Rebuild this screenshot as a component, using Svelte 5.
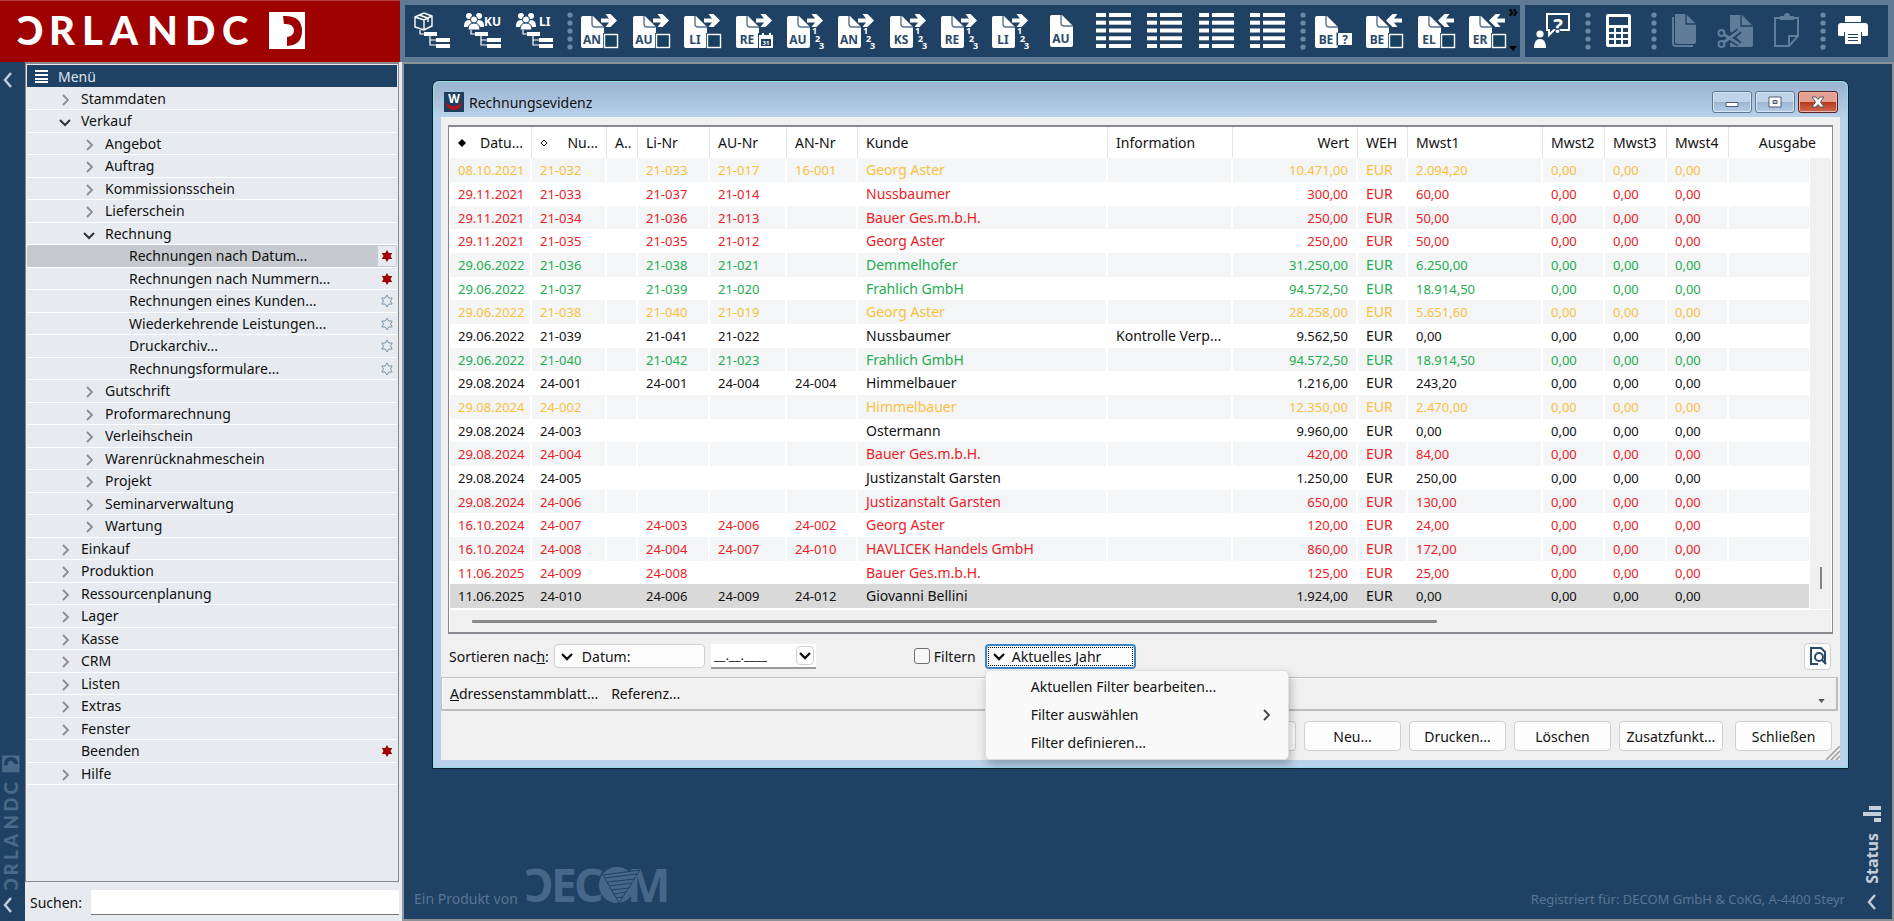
<script>
  const mainTools = [
    { kind: "box", name: "Artikel" },
    { kind: "people", text: "KU", name: "Kunden" },
    { kind: "people", text: "LI", name: "Lieferanten" },
    { kind: "dots" },
    { kind: "doc", text: "AN", arrow: "right", extra: "square" },
    { kind: "doc", text: "AU", arrow: "right", extra: "square" },
    { kind: "doc", text: "LI", arrow: "right", extra: "square" },
    { kind: "doc", text: "RE", arrow: "right", extra: "calendar" },
    { kind: "doc", text: "AU", arrow: "right", extra: "numbers" },
    { kind: "doc", text: "AN", arrow: "right", extra: "numbers" },
    { kind: "doc", text: "KS", arrow: "right", extra: "numbers" },
    { kind: "doc", text: "RE", arrow: "right", extra: "numbers" },
    { kind: "doc", text: "LI", arrow: "right", extra: "numbers" },
    { kind: "single", text: "AU" },
    { kind: "list", name: "Liste 1" },
    { kind: "list", name: "Liste 2" },
    { kind: "list", name: "Liste 3" },
    { kind: "list", name: "Liste 4" },
    { kind: "dots" },
    { kind: "doc", text: "BE", extra: "question" },
    { kind: "doc", text: "BE", arrow: "left", extra: "square" },
    { kind: "doc", text: "EL", arrow: "left", extra: "square" },
    { kind: "doc", text: "ER", arrow: "left", extra: "square" },
  ];

  const sideTools = [
    { kind: "help", name: "Hilfe" },
    { kind: "dots" },
    { kind: "calc", name: "Rechner" },
    { kind: "dots" },
    { kind: "copy", name: "Kopieren", disabled: true },
    { kind: "cut", name: "Ausschneiden", disabled: true },
    { kind: "paste", name: "Einfügen", disabled: true },
    { kind: "dots" },
    { kind: "print", name: "Drucken" },
  ];

  let tree = [
    { label: "Stammdaten", level: 0, arrow: "closed" },
    { label: "Verkauf", level: 0, arrow: "open" },
    { label: "Angebot", level: 1, arrow: "closed" },
    { label: "Auftrag", level: 1, arrow: "closed" },
    { label: "Kommissionsschein", level: 1, arrow: "closed" },
    { label: "Lieferschein", level: 1, arrow: "closed" },
    { label: "Rechnung", level: 1, arrow: "open" },
    { label: "Rechnungen nach Datum...", level: 2, star: "on" },
    { label: "Rechnungen nach Nummern...", level: 2, star: "on" },
    { label: "Rechnungen eines Kunden...", level: 2, star: "off" },
    { label: "Wiederkehrende Leistungen...", level: 2, star: "off" },
    { label: "Druckarchiv...", level: 2, star: "off" },
    { label: "Rechnungsformulare...", level: 2, star: "off" },
    { label: "Gutschrift", level: 1, arrow: "closed" },
    { label: "Proformarechnung", level: 1, arrow: "closed" },
    { label: "Verleihschein", level: 1, arrow: "closed" },
    { label: "Warenrücknahmeschein", level: 1, arrow: "closed" },
    { label: "Projekt", level: 1, arrow: "closed" },
    { label: "Seminarverwaltung", level: 1, arrow: "closed" },
    { label: "Wartung", level: 1, arrow: "closed" },
    { label: "Einkauf", level: 0, arrow: "closed" },
    { label: "Produktion", level: 0, arrow: "closed" },
    { label: "Ressourcenplanung", level: 0, arrow: "closed" },
    { label: "Lager", level: 0, arrow: "closed" },
    { label: "Kasse", level: 0, arrow: "closed" },
    { label: "CRM", level: 0, arrow: "closed" },
    { label: "Listen", level: 0, arrow: "closed" },
    { label: "Extras", level: 0, arrow: "closed" },
    { label: "Fenster", level: 0, arrow: "closed" },
    { label: "Beenden", level: 0, star: "on" },
    { label: "Hilfe", level: 0, arrow: "closed" },
  ];

  // color, date, number, Li, AU, AN, customer, info, value, vat
  const rows = [
    ["orange", "08.10.2021", "21-032", "21-033", "21-017", "16-001", "Georg Aster", "", "10.471,00", "2.094,20"],
    ["red", "29.11.2021", "21-033", "21-037", "21-014", "", "Nussbaumer", "", "300,00", "60,00"],
    ["red", "29.11.2021", "21-034", "21-036", "21-013", "", "Bauer Ges.m.b.H.", "", "250,00", "50,00"],
    ["red", "29.11.2021", "21-035", "21-035", "21-012", "", "Georg Aster", "", "250,00", "50,00"],
    ["green", "29.06.2022", "21-036", "21-038", "21-021", "", "Demmelhofer", "", "31.250,00", "6.250,00"],
    ["green", "29.06.2022", "21-037", "21-039", "21-020", "", "Frahlich GmbH", "", "94.572,50", "18.914,50"],
    ["orange", "29.06.2022", "21-038", "21-040", "21-019", "", "Georg Aster", "", "28.258,00", "5.651,60"],
    ["black", "29.06.2022", "21-039", "21-041", "21-022", "", "Nussbaumer", "Kontrolle Verp...", "9.562,50", "0,00"],
    ["green", "29.06.2022", "21-040", "21-042", "21-023", "", "Frahlich GmbH", "", "94.572,50", "18.914,50"],
    ["black", "29.08.2024", "24-001", "24-001", "24-004", "24-004", "Himmelbauer", "", "1.216,00", "243,20"],
    ["orange", "29.08.2024", "24-002", "", "", "", "Himmelbauer", "", "12.350,00", "2.470,00"],
    ["black", "29.08.2024", "24-003", "", "", "", "Ostermann", "", "9.960,00", "0,00"],
    ["red", "29.08.2024", "24-004", "", "", "", "Bauer Ges.m.b.H.", "", "420,00", "84,00"],
    ["black", "29.08.2024", "24-005", "", "", "", "Justizanstalt Garsten", "", "1.250,00", "250,00"],
    ["red", "29.08.2024", "24-006", "", "", "", "Justizanstalt Garsten", "", "650,00", "130,00"],
    ["red", "16.10.2024", "24-007", "24-003", "24-006", "24-002", "Georg Aster", "", "120,00", "24,00"],
    ["red", "16.10.2024", "24-008", "24-004", "24-007", "24-010", "HAVLICEK Handels GmbH", "", "860,00", "172,00"],
    ["red", "11.06.2025", "24-009", "24-008", "", "", "Bauer Ges.m.b.H.", "", "125,00", "25,00"],
    ["black", "11.06.2025", "24-010", "24-006", "24-009", "24-012", "Giovanni Bellini", "", "1.924,00", "0,00"],
  ];

  const logoLetters = [
    ["Ɔ", 1],
    ["R", 33],
    ["L", 66],
    ["A", 94],
    ["N", 131],
    ["D", 169],
    ["C", 206],
  ];

  const star =
    "M6 0 L7.7 3 H11.2 L9.5 6 L11.2 9 H7.7 L6 12 L4.3 9 H0.8 L2.5 6 L0.8 3 H4.3 Z";

  let selectedMenu = "Rechnungen nach Datum...";
  let selectedRow = rows.length - 1;
  let menuOpen = true;
  let filtern = false;
  let search = "";
  let date = "__.__.____";
</script>

{#snippet logo()}
  {#each logoLetters as [letter, x]}
    <text {x} y="37" class="logo-letter">{letter}</text>
  {/each}
  <path
    fill-rule="evenodd"
    d="M253 4h36v37h-36z M267 8 Q286 7 286 23 Q286 37 271 38 V29 Q278 28 278 22 Q277 15 268 16z"
  />
{/snippet}

{#snippet chevron(dir)}
  <svg class="chevron {dir}" viewBox="0 0 16 16" width="16" height="16" aria-hidden="true">
    {#if dir === "open"}
      <path d="M3 6l5 5 5-5" />
    {:else if dir === "left"}
      <path d="M11 1L5 8l6 7" />
    {:else}
      <path d="M6 3l5 5-5 5" />
    {/if}
  </svg>
{/snippet}

{#snippet nodes()}
  <path d="M7 18v4h6M17 24v9h8M17 28h8" fill="none" stroke="currentColor" stroke-width="1.2" />
  <path d="M11 20h13v4H11zM23 26h14v4H23zM23 32h14v4H23z" />
{/snippet}

{#snippet tool(t)}
  {#if t.kind === "dots"}
    <svg class="dots" viewBox="0 0 6 38" width="6" height="38" aria-hidden="true">
      {#each [3, 11, 19, 27, 35] as cy}
        <circle cx="3" {cy} r="2.6" />
      {/each}
    </svg>
  {:else}
    <button class="tool" aria-label={t.name || t.text} disabled={t.disabled}>
      <svg viewBox="0 0 38 38" width="38" height="38" aria-hidden="true">
        {#if t.kind === "box"}
          <path
            d="M2 5l9-4 8 3v10l-8 4-9-3zM2 5l9 3 8-4M11 8v10M6 3l9 3v4"
            fill="none"
            stroke="currentColor"
            stroke-width="1.4"
          />
          {@render nodes()}
        {:else if t.kind === "people"}
          <circle cx="5" cy="4" r="3" />
          <circle cx="15" cy="4" r="3" />
          <path d="M0 14q0-6 5-6 3 0 3 3l-3 4H0zM20 14q0-6-5-6-3 0-3 3l3 4h5z" />
          <circle cx="10" cy="7.5" r="3.6" class="cut" />
          <path class="cut" d="M4 18q0-7 6-7t6 7z" />
          {@render nodes()}
          <text x={t.text === "KU" ? 20 : 23} y="14" class="side-text">{t.text}</text>
        {:else if t.kind === "doc" || t.kind === "single"}
          <g transform={t.kind === "single" ? "translate(6 -1)" : ""}>
            <path d="M2 4h10l11 11v19q0 2-2 2H2q-2 0-2-2V6q0-2 2-2z" />
            <path class="fold" d="M11 4v8q0 3 3 3h9" fill="none" />
            <text x="11" y="32" class="doc-text">{t.text}</text>
          </g>
          {#if t.arrow === "right"}
            <path class="arrow" d="M20 6.5h8L24.500 2h5l6.500 6.500-6.500 6.500h-5L28 10.500h-8z" />
          {:else if t.arrow === "left"}
            <path class="arrow" d="M36 6.5h-8L31.500 2h-5L20 8.500l6.500 6.500h5L28 10.500h8z" />
          {/if}
          {#if t.extra === "square"}
            <rect x="22" y="21" width="16" height="16" class="gap" />
            <rect x="23.5" y="22.5" width="13" height="13" class="square" />
          {:else if t.extra === "calendar"}
            <rect x="22" y="21" width="16" height="16" class="gap" />
            <path fill-rule="evenodd" d="M24 23h2v-2h2v2h5v-2h2v2h2v13H23V23zM25 27v7h10v-7z" />
            <text x="30" y="33" class="tiny-text">31</text>
          {:else if t.extra === "question"}
            <path d="M21.5 20.5h16.5v13H21.5z" class="gap" />
            <path d="M23 21h14v12H23z" />
            <text x="30" y="32" class="doc-text">?</text>
          {:else if t.extra === "numbers"}
            <text x="25" y="22" class="number">1</text>
            <text x="28" y="30" class="number">2</text>
            <text x="32" y="37" class="number">3</text>
          {/if}
        {:else if t.kind === "list"}
          {#each [1, 8.7, 16.5, 24.3, 32] as y}
            <rect x="1" {y} width="10" height="4" />
            <rect x="14" {y} width="22" height="4" />
          {/each}
        {:else if t.kind === "help"}
          <path d="M13 2h22v16H20l-5 5v-5h-2z" fill="none" stroke="currentColor" stroke-width="2" />
          <text x="24" y="21" class="big-mark">?</text>
          <circle cx="6" cy="22" r="3.6" />
          <path d="M0 36q0-9 6-9t6 9z" />
        {:else if t.kind === "calc"}
          <path
            fill-rule="evenodd"
            d="M8 2h21q2 0 2 2v29q0 2-2 2H8q-2 0-2-2V4q0-2 2-2zM9 5v8h19V5zM9 16v4h5v-4zM16 16v4h5v-4zM23 16v4h5v-4zM9 22v4h5v-4zM16 22v4h5v-4zM23 22v4h5v-4zM9 28v4h5v-4zM16 28v4h5v-4zM23 28v4h5v-4z"
          />
        {:else if t.kind === "copy"}
          <path d="M9 2h11l10 10v18q0 2-2 2H11q-2 0-2-2z" />
          <path d="M20 2v10h10" class="fold" fill="none" />
          <path d="M7 5v26q0 3 3 3h17" fill="none" stroke="currentColor" stroke-width="2" />
        {:else if t.kind === "cut"}
          <path d="M13 3h12l11 11v19q0 2-2 2H13z" />
          <path d="M24 3v11h12M12 19l12 12M12 31l12-11" class="fold" fill="none" />
          <path class="blade-gap" d="M6 22l16 10M6 31l16-12" />
          <path class="blade" d="M6 22l16 10M6 31l16-12" />
          <circle cx="4.5" cy="21" r="3" class="ring" />
          <circle cx="4.5" cy="32" r="3" class="ring" />
        {:else if t.kind === "paste"}
          <path d="M7 6h23v18l-9 10H7zM30 24h-9v10" fill="none" stroke="currentColor" stroke-width="2" />
          <path d="M12 8V4h4q0-3 3-3t3 3h4v4z" />
        {:else if t.kind === "print"}
          <path
            fill-rule="evenodd"
            d="M11 4h16v6H11zM7 11h24q3 0 3 3v9q0 1-2 1h-4v-4H10v4H6q-2 0-2-1v-9q0-3 3-3z"
          />
          <path fill-rule="evenodd" d="M11 19h16v13H11zM14 22v1h10v-1zM14 25v1h10v-1zM14 28v1h10v-1z" />
        {/if}
      </svg>
    </button>
  {/if}
{/snippet}

<div class="app">
  <header class="top">
    <div class="brand">
      <svg viewBox="0 0 290 50" width="290" height="50" role="img" aria-label="Orlando">
        {@render logo()}
      </svg>
    </div>
    <div class="toolbars">
      <div class="toolbar main-tools">
        {#each mainTools as t}
          {@render tool(t)}
        {/each}
        <div class="overflow">
          <span>»</span>
          <svg viewBox="0 0 8 5" width="8" height="5"><path d="M0 0h8L4 5z" /></svg>
        </div>
      </div>
      <div class="toolbar side-tools">
        {#each sideTools as t}
          {@render tool(t)}
        {/each}
      </div>
    </div>
  </header>

  <div class="body">
    <div class="strip">
      <button class="collapse" aria-label="Einklappen">{@render chevron("left")}</button>
      <div class="strip-bottom">
        <svg class="strip-logo" viewBox="0 0 50 290" width="24" height="136" aria-hidden="true">
          <g transform="translate(0 290) rotate(-90)">{@render logo()}</g>
        </svg>
        <button class="collapse" aria-label="Einklappen">{@render chevron("left")}</button>
      </div>
    </div>

    <aside class="sidebar">
      <nav class="tree">
        <div class="tree-head">
          <svg viewBox="0 0 13 13" width="13" height="13" aria-hidden="true">
            <path d="M0 0h13v2H0zM0 4h13v2H0zM0 8h13v2H0zM0 11h13v2H0z" />
          </svg>
          Menü
        </div>
        <ul>
          {#each tree as item}
            <li>
              <button
                class="node level{item.level}"
                class:selected={item.label === selectedMenu}
                on:click={() => (selectedMenu = item.label)}
              >
                <span class="slot">
                  {#if item.arrow}{@render chevron(item.arrow)}{/if}
                </span>
                <span class="label">{item.label}</span>
                {#if item.star}
                  <span class="star {item.star}">
                    <svg viewBox="0 0 12 12" width="12" height="12" aria-hidden="true">
                      <path d={star} />
                    </svg>
                  </span>
                {/if}
              </button>
            </li>
          {/each}
        </ul>
      </nav>
      <div class="search">
        <label for="search">Suchen:</label>
        <input id="search" type="text" bind:value={search} />
      </div>
    </aside>

    <main class="desktop">
      <section class="window">
        <div class="titlebar">
          <svg viewBox="0 0 20 20" width="20" height="20" aria-hidden="true">
            <rect width="20" height="20" fill="#1f3f61" />
            <path d="M2 10q1 8 8 8t8-8q-3 4-8 4t-8-4z" fill="#b0141c" />
            <text x="10" y="11" class="w-mark">W</text>
          </svg>
          <h1>Rechnungsevidenz</h1>
          <div class="window-buttons">
            <button aria-label="Minimieren">
              <svg viewBox="0 0 14 14" width="14" height="14"><path d="M1 7.5h12v4H1z" class="glyph" /></svg>
            </button>
            <button aria-label="Maximieren">
              <svg viewBox="0 0 14 14" width="14" height="14">
                <path d="M1 2h12v10H1zM5 5.5h4v3H5z" fill-rule="evenodd" class="glyph" />
              </svg>
            </button>
            <button class="close" aria-label="Schließen">
              <svg viewBox="0 0 14 14" width="14" height="14">
                <path d="M1 2h4l2 2.500L9 2h4L9.500 7l3.500 5H9L7 9.500 5 12H1l3.500-5z" class="glyph" />
              </svg>
            </button>
          </div>
        </div>

        <div class="client">
          <div class="grid">
            <table>
              <colgroup>
                <col class="c-date" />
                <col class="c-num" />
                <col class="c-a" />
                <col class="c-li" />
                <col class="c-au" />
                <col class="c-an" />
                <col />
                <col class="c-info" />
                <col class="c-info" />
                <col class="c-weh" />
                <col class="c-vat" />
                <col class="c-small" />
                <col class="c-small" />
                <col class="c-small" />
                <col class="c-out" />
              </colgroup>
              <thead>
                <tr>
                  <th>
                    <span class="sort">
                      <svg viewBox="0 0 8 8" width="8" height="8"><path d="M4 0l4 4-4 4-4-4z" /></svg>
                      Datu...
                    </span>
                  </th>
                  <th>
                    <span class="sort">
                      <svg viewBox="0 0 8 8" width="8" height="8">
                        <path d="M4 1l3 3-3 3-3-3z" fill="none" stroke="#000" />
                      </svg>
                      Nu...
                    </span>
                  </th>
                  <th>A..</th>
                  <th>Li-Nr</th>
                  <th>AU-Nr</th>
                  <th>AN-Nr</th>
                  <th>Kunde</th>
                  <th>Information</th>
                  <th class="right">Wert</th>
                  <th>WEH</th>
                  <th>Mwst1</th>
                  <th>Mwst2</th>
                  <th>Mwst3</th>
                  <th>Mwst4</th>
                  <th class="right out">Ausgabe</th>
                </tr>
              </thead>
              <tbody>
                {#each rows as [color, datum, nr, li, au, an, kunde, info, wert, mwst], i}
                  <tr class={color} class:selected={i === selectedRow} on:click={() => (selectedRow = i)}>
                    <td class="num">{datum}</td>
                    <td class="num">{nr}</td>
                    <td></td>
                    <td class="num">{li}</td>
                    <td class="num">{au}</td>
                    <td class="num">{an}</td>
                    <td>{kunde}</td>
                    <td>{info}</td>
                    <td class="num right">{wert}</td>
                    <td>EUR</td>
                    <td class="num">{mwst}</td>
                    <td class="num">0,00</td>
                    <td class="num">0,00</td>
                    <td class="num">0,00</td>
                    <td></td>
                  </tr>
                {/each}
              </tbody>
            </table>
            <div class="vscroll"><div class="vthumb"></div></div>
            <div class="hscroll"><div class="hthumb"></div></div>
          </div>

          <div class="controls">
            <label for="sort">Sortieren nac<u>h</u>:</label>
            <div class="select">
              {@render chevron("open")}
              <select id="sort">
                <option>Datum:</option>
                <option>Nummer:</option>
              </select>
            </div>
            <div class="date">
              <input type="text" aria-label="Datum" bind:value={date} />
              <button aria-label="Kalender">{@render chevron("open")}</button>
            </div>
            <label class="check">
              <input type="checkbox" bind:checked={filtern} />
              Filtern
            </label>
            <div class="filter">
              <button
                class="filter-button"
                aria-haspopup="menu"
                aria-expanded={menuOpen}
                on:click={() => (menuOpen = !menuOpen)}
              >
                {@render chevron("open")}
                Aktuelles Jahr
              </button>
              {#if menuOpen}
                <div class="menu" role="menu">
                  <button role="menuitem">Aktuellen Filter bearbeiten...</button>
                  <button role="menuitem">Filter auswählen {@render chevron("closed")}</button>
                  <button role="menuitem">Filter definieren...</button>
                </div>
              {/if}
            </div>
            <button class="preview" aria-label="Vorschau">
              <svg viewBox="0 0 18 20" width="18" height="20">
                <path d="M9 18H2V2h10l4 4v6" />
                <circle cx="10" cy="11" r="4" />
                <path d="M13 14l4 4M16 6v12" />
              </svg>
            </button>
          </div>

          <div class="links">
            <button><u>A</u>dressenstammblatt...</button>
            <button>Referenz...</button>
            <svg viewBox="0 0 8 5" width="7" height="4"><path d="M0 0h8L4 5z" /></svg>
          </div>

          <div class="actions">
            <button aria-label="Ändern"></button>
            <button>Neu...</button>
            <button>Drucken...</button>
            <button>Löschen</button>
            <button class="wide">Zusatzfunkt...</button>
            <button class="last">Schließen</button>
            <svg class="grip" viewBox="0 0 14 14" width="14" height="14" aria-hidden="true">
              <path d="M0 14L14 0M5 14l9-9M10 14l4-4" />
            </svg>
          </div>
        </div>
      </section>

      <footer>
        <div class="product">
          Ein Produkt von
          <svg viewBox="0 0 144 50" width="144" height="50" role="img" aria-label="Decom">
            <text x="-2" y="37" class="decom">Ɔ</text>
            <text x="25" y="37" class="decom">E</text>
            <text x="48" y="37" class="decom">C</text>
            <text x="101" y="37" class="decom">M</text>
            <ellipse cx="91" cy="20" rx="18" ry="18" />
            <path d="M77 10L114 5 93 38z" class="cone" />
            <path d="M79 13l32-4M81 17l28-3M83 21l23-3M85 25l18-2M88 29l12-2M90 33l7-1" class="stripe" />
          </svg>
        </div>
        <div class="licence">Registriert für: DECOM GmbH &amp; CoKG, A-4400 Steyr</div>
      </footer>

      <div class="status">
        <svg viewBox="0 0 18 18" width="18" height="18" aria-hidden="true">
          <path d="M11 13h7v4h-7zM0 7h18v4H0zM6 1h12v4H6z" />
        </svg>
        <span>Status</span>
        <button class="collapse" aria-label="Status öffnen">{@render chevron("left")}</button>
      </div>
    </main>
  </div>
</div>

<style>
  :global(body) {
    background: #1f4264;
  }

  .app {
    font-family: "Noto Sans", "Open Sans", sans-serif;
    font-size: 14px;
    color: #111;
    min-height: 100vh;
    display: flex;
    flex-direction: column;
    background: #1f4264;
  }

  .app * {
    box-sizing: border-box;
  }

  button,
  input,
  select {
    font: inherit;
    color: inherit;
    margin: 0;
    padding: 0;
    border: 0;
    background: none;
  }

  svg {
    display: block;
    flex: none;
  }

  /* header */
  .top {
    display: flex;
    height: 62px;
  }

  .brand {
    flex: none;
    width: 400px;
    background: #9f0000;
    border-top: 1px solid #b04040;
    padding: 7px 16px 0;
    fill: #fff;
  }

  .logo-letter {
    font-family: Lato, "Noto Sans", sans-serif;
    font-weight: 900;
    font-size: 40px;
  }

  .toolbars {
    flex: 1;
    display: flex;
    gap: 5px;
    padding: 5px 6px 5px 5px;
    background: #607b96;
  }

  .toolbar {
    display: flex;
    align-items: center;
    justify-content: space-between;
    background: #1f4264;
    position: relative;
  }

  .main-tools {
    flex: 1;
    padding: 0 13px 0 8px;
  }

  .side-tools {
    flex: none;
    width: 363px;
    padding: 0 16px 0 9px;
  }

  .tool {
    width: 38px;
    height: 38px;
    color: #fff;
    fill: #fff;
  }

  .tool:disabled {
    color: #5f7c99;
    fill: #5f7c99;
  }

  .dots {
    fill: #6d88a3;
    margin-right: -5px;
  }

  .fold {
    stroke: #5a7490;
    stroke-width: 1.4;
  }

  .tool:disabled .fold {
    stroke: #1f4264;
  }

  .cut {
    stroke: #1f4264;
    stroke-width: 1;
  }

  .arrow {
    stroke: #1f4264;
    stroke-width: 1;
    paint-order: stroke;
  }

  .gap {
    fill: #1f4264;
  }

  .square {
    fill: #17405f;
    stroke: #fff;
    stroke-width: 1.4;
  }

  .blade,
  .blade-gap {
    fill: none;
    stroke: #5f7c99;
    stroke-width: 3;
  }

  .blade-gap {
    stroke: #1f4264;
    stroke-width: 6;
  }

  .ring {
    fill: none;
    stroke: #5f7c99;
    stroke-width: 2;
  }

  .doc-text {
    font-size: 12px;
    font-weight: 700;
    fill: #2b4a6b;
    text-anchor: middle;
  }

  .tiny-text {
    font-size: 6px;
    font-weight: 700;
    text-anchor: middle;
  }

  .side-text {
    font-size: 12px;
    font-weight: 700;
  }

  .number {
    font-size: 9px;
    font-weight: 700;
  }

  .big-mark {
    font-size: 20px;
    font-weight: 700;
    text-anchor: middle;
    stroke: #1f4264;
    stroke-width: 2;
    paint-order: stroke;
  }

  .overflow {
    position: absolute;
    top: 0;
    right: 2px;
    bottom: 6px;
    display: flex;
    flex-direction: column;
    align-items: center;
    justify-content: space-between;
    font-weight: 700;
    font-size: 16px;
    line-height: 12px;
    color: #000;
  }

  /* left side */
  .body {
    flex: 1;
    display: flex;
  }

  .strip {
    flex: none;
    width: 25px;
    display: flex;
    flex-direction: column;
    justify-content: space-between;
    padding: 10px 0 8px;
  }

  .strip-bottom {
    display: flex;
    flex-direction: column;
    gap: 6px;
  }

  .strip-logo {
    fill: #4a6a89;
  }

  .chevron {
    fill: none;
    stroke: #111;
    stroke-width: 2.4;
  }

  .chevron.closed {
    stroke: #8a8d92;
    stroke-width: 1.8;
  }

  .chevron.left {
    stroke: #c3cfdb;
  }

  .sidebar {
    flex: none;
    width: 379px;
    background: #e7ebf0;
    border-right: 2px solid #8e959c;
    padding-right: 3px;
    display: flex;
    flex-direction: column;
  }

  .tree {
    flex: 1;
    border: 1px solid #85898e;
    border-top-width: 2px;
    padding: 1px 1px 0;
  }

  .tree-head {
    height: 22px;
    display: flex;
    align-items: center;
    gap: 10px;
    padding-left: 8px;
    background: #1f4264;
    color: #dfe6ee;
    fill: #fff;
  }

  ul {
    list-style: none;
    margin: 0;
    padding: 1px 0 0;
  }

  li {
    height: 22px;
  }

  li:nth-child(even) {
    height: 23px;
  }

  .node {
    width: 100%;
    height: 100%;
    display: flex;
    align-items: center;
    text-align: left;
    border-bottom: 1px solid #fff;
  }

  .level0 {
    padding-left: 30px;
  }

  .level1 {
    padding-left: 54px;
  }

  .level2 {
    padding-left: 78px;
  }

  .slot {
    width: 24px;
    padding-top: 2px;
  }

  .slot .chevron.open {
    stroke-width: 2;
    stroke: #333;
  }

  .label {
    flex: 1;
    line-height: 20px;
  }

  .star {
    width: 18px;
    height: 20px;
    margin-right: 1px;
    display: grid;
    place-items: center;
    background: #e7ebf0;
    fill: #a00000;
  }

  .star.off {
    fill: none;
    stroke: #7d94a9;
  }

  .node.selected {
    background: #c6c9cd;
    border-radius: 2px;
  }

  .search {
    height: 39px;
    display: flex;
    align-items: center;
    gap: 9px;
    padding: 2px 0 0 5px;
  }

  .search input {
    flex: 1;
    min-width: 0;
    height: 25px;
    background: #fff;
    border-bottom: 1px solid #777;
  }

  /* desktop and window */
  .desktop {
    flex: 1;
    min-width: 0;
    position: relative;
    display: flex;
    flex-direction: column;
    border: solid #8c9196;
    border-width: 2px 2px 2px 0;
    padding: 16px 43px 0 28px;
  }

  .window {
    border: 1px solid #0d1f2c;
    border-radius: 7px 7px 0 0;
    background: #b9d1ea;
    box-shadow: inset 0 0 0 1px #8fe0ee;
    padding: 1px 8px 8px;
  }

  .titlebar {
    display: flex;
    align-items: center;
    gap: 5px;
    height: 35px;
    margin: 0 -7px;
    padding: 5px 2px 0 10px;
    border-radius: 6px 6px 0 0;
    background: linear-gradient(#98b3d0, #b9d1ea);
  }

  .w-mark {
    font-size: 12px;
    font-weight: 700;
    fill: #fff;
    text-anchor: middle;
  }

  h1 {
    flex: 1;
    margin: 0;
    font-size: 14px;
    font-weight: 400;
  }

  .window-buttons {
    display: flex;
    gap: 3px;
    padding-right: 7px;
  }

  .window-buttons button {
    width: 40px;
    height: 22px;
    display: grid;
    place-items: center;
    border: 1px solid #5d7792;
    border-radius: 3px;
    background: linear-gradient(#bfd3e8 50%, #9cb6d2 50%, #b4cce5);
    box-shadow: inset 0 0 0 1px #d8e5f2;
  }

  .window-buttons .close {
    border-color: #5a2323;
    background: linear-gradient(#e3a093 50%, #b9371c 50%, #d1694d);
    box-shadow: inset 0 0 0 1px #e9b5aa;
  }

  .glyph {
    fill: #fff;
    stroke: #4d5c6e;
    stroke-width: 1;
  }

  .client {
    background: #f0f0f0;
    padding-top: 8px;
  }

  .grid {
    position: relative;
    margin: 0 7px;
    border: 1px solid #868a90;
    border-width: 2px 1px 2px 1px;
    background: #fff;
    padding: 0 1px;
  }

  table {
    width: 100%;
    table-layout: fixed;
    border-collapse: separate;
    border-spacing: 0;
  }

  .c-date { width: 82px; }
  .c-num { width: 75px; }
  .c-a { width: 31px; }
  .c-li { width: 72px; }
  .c-au { width: 77px; }
  .c-an { width: 71px; }
  .c-info { width: 125px; }
  .c-weh { width: 50px; }
  .c-vat { width: 135px; }
  .c-small { width: 62px; }
  .c-out { width: 102px; }

  th {
    height: 31px;
    padding: 0 0 0 8px;
    font-weight: 400;
    text-align: left;
    white-space: nowrap;
    border-right: 1px solid #e4e4e4;
  }

  th:last-child {
    border-right: 0;
  }

  .sort {
    display: flex;
    align-items: center;
    justify-content: space-between;
    padding-right: 8px;
  }

  td {
    height: 24px;
    padding: 0 0 0 8px;
    line-height: 20px;
    white-space: nowrap;
    border-right: 2px solid #fff;
  }

  tr:nth-child(3n) td {
    height: 23px;
  }

  td.num {
    font-size: 13px;
  }

  .right {
    text-align: right;
    padding-right: 8px;
  }

  .out {
    padding-right: 15px;
  }

  tbody tr:nth-child(odd) td {
    background: #f3f5f7;
  }

  tbody tr.selected td {
    background: #d9d9d9;
    border-color: #d9d9d9;
  }

  .orange { color: #f8c03c; }
  .red { color: #ec1c24; }
  .green { color: #22ad4f; }
  .black { color: #111; }

  .vscroll {
    position: absolute;
    top: 31px;
    right: 1px;
    bottom: 23px;
    width: 22px;
    background: #f0f0f0;
    border-left: 1px solid #fff;
    display: flex;
    flex-direction: column;
    align-items: center;
    justify-content: flex-end;
    padding-bottom: 20px;
  }

  .vthumb {
    width: 2px;
    height: 22px;
    background: #858585;
  }

  .hscroll {
    height: 24px;
    border-top: 2px solid #fff;
    background: #f0f0f0;
    padding: 10px 0 0 22px;
  }

  .hthumb {
    width: 71%;
    height: 3px;
    border-radius: 1px;
    background: #8a8a8a;
  }

  /* lower controls */
  .controls {
    display: flex;
    align-items: center;
    height: 43px;
    padding: 1px 9px 0 8px;
    position: relative;
  }

  .select {
    position: relative;
    margin: 0 6px 0 5px;
  }

  .select .chevron {
    position: absolute;
    left: 5px;
    top: 4px;
    pointer-events: none;
  }

  select {
    appearance: none;
    width: 151px;
    height: 24px;
    padding-left: 27px;
    background: #fdfdfd;
    border: 1px solid #cfcfcf;
    border-radius: 4px;
  }

  .date {
    width: 105px;
    height: 25px;
    display: flex;
    align-items: center;
    background: #fff;
    border-bottom: 2px solid #9a9a9a;
    padding-right: 2px;
  }

  .date input {
    flex: 1;
    min-width: 0;
    padding-left: 3px;
    font-size: 13px;
  }

  .date button {
    width: 18px;
    height: 19px;
    display: grid;
    place-items: center;
    border: 1px solid #d0d0d0;
    border-radius: 4px;
  }

  .check {
    display: flex;
    align-items: center;
    gap: 4px;
    margin: 0 9px 0 98px;
  }

  .check input {
    appearance: none;
    width: 16px;
    height: 16px;
    border: 1px solid #707070;
    border-radius: 3px;
    background: #f8f8f8;
  }

  .check input:checked {
    background: #1f5f9f;
  }

  .filter {
    position: relative;
  }

  .filter-button {
    display: flex;
    align-items: center;
    gap: 5px;
    width: 151px;
    height: 25px;
    padding-left: 4px;
    background: #fdfdfd;
    border: 2px solid #3a87c8;
    border-radius: 4px;
    outline: 1px dotted #000;
    outline-offset: -4px;
  }

  .menu {
    position: absolute;
    z-index: 2;
    top: 26px;
    left: 0;
    width: 304px;
    padding: 2px 0;
    background: #f9f9f9;
    border: 1px solid #dedede;
    border-radius: 5px;
    box-shadow: 2px 5px 10px rgba(0, 0, 0, 0.25);
  }

  .menu button {
    display: flex;
    align-items: center;
    justify-content: space-between;
    width: 100%;
    height: 28px;
    padding: 0 14px 0 45px;
  }

  .menu .chevron {
    stroke: #444;
  }

  .preview {
    width: 27px;
    height: 27px;
    margin-left: auto;
    display: grid;
    place-items: center;
    background: #fdfdfd;
    border: 1px solid #d0d0d0;
    border-radius: 4px;
    fill: none;
    stroke: #2b4a6b;
    stroke-width: 2;
  }

  .links {
    display: flex;
    align-items: center;
    gap: 13px;
    height: 34px;
    margin-right: 2px;
    padding: 0 11px 0 8px;
    border: 1px solid #bdbdbd;
    border-width: 1px 2px 2px 1px;
    box-shadow: inset 1px 1px 0 #fff;
  }

  .links svg {
    margin: 14px 0 0 auto;
    fill: #555;
  }

  .actions {
    display: flex;
    justify-content: flex-end;
    gap: 8px;
    height: 49px;
    padding: 10px 8px 0;
    position: relative;
  }

  .actions button {
    width: 97px;
    height: 30px;
    background: #fdfdfd;
    border: 1px solid #d0d0d0;
    border-radius: 4px;
  }

  .actions .wide {
    width: 104px;
  }

  .actions .last {
    margin-left: 4px;
  }

  .grip {
    position: absolute;
    right: 0;
    bottom: 0;
    stroke: #9a9a9a;
    stroke-width: 1.5;
  }

  footer {
    flex: 1;
    display: flex;
    align-items: flex-end;
    justify-content: space-between;
    margin-left: -18px;
    padding: 0 4px 11px 0;
    color: #587591;
  }

  .product {
    display: flex;
    align-items: flex-end;
    gap: 8px;
    fill: #46678a;
  }

  .product svg {
    margin-bottom: -7px;
  }

  .decom {
    font-weight: 700;
    font-size: 46px;
  }

  .cone {
    fill: #46678a;
    stroke: #1f4264;
    stroke-width: 1;
  }

  .stripe {
    fill: none;
    stroke: #1f4264;
    stroke-width: 1;
  }

  .licence {
    font-size: 13px;
  }

  .status {
    position: absolute;
    right: 9px;
    bottom: 9px;
    display: flex;
    flex-direction: column;
    align-items: center;
    gap: 10px;
    color: #c3cfdb;
    fill: #c3cfdb;
    font-weight: 700;
    font-size: 16px;
  }

  .status span {
    writing-mode: vertical-rl;
    transform: rotate(180deg);
  }
</style>
